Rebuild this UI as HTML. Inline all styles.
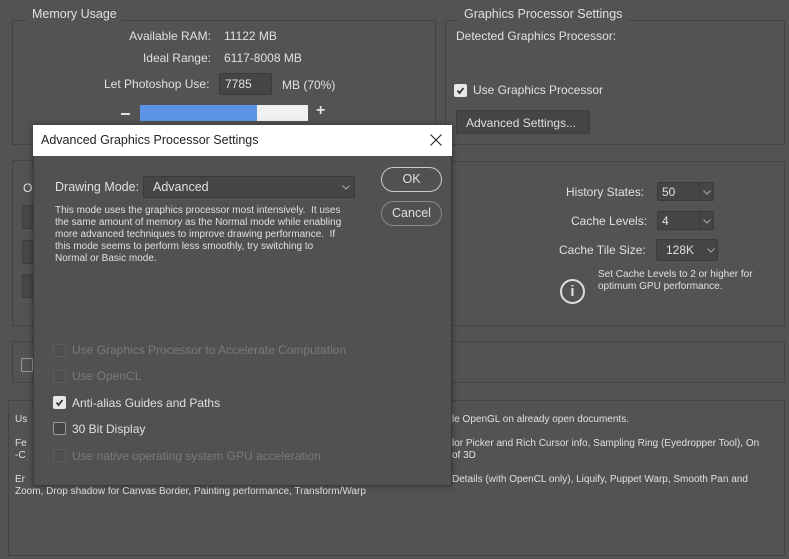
<!DOCTYPE html>
<html><head><meta charset="utf-8"><style>
*{box-sizing:border-box;margin:0;padding:0}
body{width:789px;height:559px;background:#535353;font-family:"Liberation Sans",sans-serif;color:#e0e0e0;font-size:12px;position:relative;overflow:hidden}
.a{position:absolute;white-space:nowrap}
.box{position:absolute;border:1px solid #444}
.lbl{position:absolute;background:#535353;padding:0 5px;font-size:12.5px}
.inp{position:absolute;background:#454545;border:1px solid #3a3a3a;border-radius:2px}
.sel{position:absolute;background:#454545;border:1px solid #3a3a3a;border-radius:2px}
.chev{position:absolute;width:8px;height:5px}
.cb{position:absolute;width:13px;height:13px;border:1px solid #999;border-radius:2px;background:#444}
.cb.on{background:#e8e8e8;border-color:#e8e8e8}
.cb.dis{border-color:#5c5c5c;background:#4f4f4f}
.small{font-size:10px;color:#e0e0e0;line-height:12px}
.dis{color:#7a7a7a}
</style></head><body>
<div class="box" style="left:12px;top:20px;width:424px;height:125px"></div>
<div class="lbl" style="left:27px;top:7px">Memory Usage</div>
<div class="a" style="right:578px;top:29px">Available RAM:</div>
<div class="a" style="left:224px;top:29px">11122 MB</div>
<div class="a" style="right:578px;top:51px">Ideal Range:</div>
<div class="a" style="left:224px;top:51px">6117-8008 MB</div>
<div class="a" style="left:104px;top:77px">Let Photoshop Use:</div>
<div class="inp" style="left:219px;top:73px;width:53px;height:22px"></div>
<div class="a" style="left:225px;top:77px">7785</div>
<div class="a" style="left:282px;top:78px">MB (70%)</div>
<div class="a" style="left:121px;width:9px;height:2px;top:113px;background:#e0e0e0"></div>
<div class="a" style="left:140px;top:105px;width:117px;height:16px;background:#5c95e8"></div>
<div class="a" style="left:257px;top:105px;width:51px;height:16px;background:#f0f0f0"></div>
<div class="a" style="left:316px;top:102px;font-size:16px;font-weight:bold">+</div>
<div class="box" style="left:445px;top:20px;width:340px;height:125px"></div>
<div class="lbl" style="left:459px;top:7px">Graphics Processor Settings</div>
<div class="a" style="left:456px;top:29px">Detected Graphics Processor:</div>
<div class="cb on" style="left:454px;top:84px"><svg width="11" height="11" style="position:absolute;left:0;top:0"><path d="M2.5 5.5 L4.5 8 L8.5 3" stroke="#333" stroke-width="1.8" fill="none"/></svg></div>
<div class="a" style="left:473px;top:83px">Use Graphics Processor</div>
<div class="a" style="left:456px;top:110px;width:134px;height:24px;background:#454545;border:1px solid #3d3d3d;border-radius:2px"></div>
<div class="a" style="left:466px;top:116px">Advanced Settings...</div>
<div class="box" style="left:12px;top:160px;width:430px;height:166px"></div>
<div class="a" style="left:23px;top:181px">O</div>
<div class="a" style="left:22px;top:205px;width:20px;height:24px;background:#474747;border:1px solid #3d3d3d"></div>
<div class="a" style="left:22px;top:240px;width:20px;height:24px;background:#474747;border:1px solid #3d3d3d"></div>
<div class="a" style="left:22px;top:274px;width:20px;height:24px;background:#474747;border:1px solid #3d3d3d"></div>
<div class="box" style="left:451px;top:161px;width:334px;height:165px"></div>
<div class="a" style="left:566px;top:185px">History States:</div>
<div class="sel" style="left:657px;top:182px;width:57px;height:19px"></div><div class="a" style="left:662px;top:185px">50</div><div class="a" style="left:699px;top:183px;width:1px;height:17px;background:#3a3a3a"></div><svg class="chev" style="left:703px;top:190px"><path d="M0.5 0.5 L4 4 L7.5 0.5" stroke="#aaa" fill="none"/></svg>
<div class="a" style="left:571px;top:214px">Cache Levels:</div>
<div class="sel" style="left:657px;top:211px;width:57px;height:19px"></div><div class="a" style="left:662px;top:214px">4</div><div class="a" style="left:699px;top:212px;width:1px;height:17px;background:#3a3a3a"></div><svg class="chev" style="left:703px;top:219px"><path d="M0.5 0.5 L4 4 L7.5 0.5" stroke="#aaa" fill="none"/></svg>
<div class="a" style="left:559px;top:243px">Cache Tile Size:</div>
<div class="sel" style="left:656px;top:239px;width:62px;height:22px"></div><div class="a" style="left:666px;top:243px">128K</div><svg class="chev" style="left:707px;top:248px"><path d="M0.5 0.5 L4 4 L7.5 0.5" stroke="#aaa" fill="none"/></svg>
<div class="a small" style="left:598px;top:269px">Set Cache Levels to 2 or higher for<br>optimum GPU performance.</div>
<div class="a" style="left:560px;top:279px;width:25px;height:25px;border:2px solid #ddd;border-radius:50%;text-align:center;font-weight:bold;font-size:15px;line-height:21px">i</div>
<div class="box" style="left:12px;top:341px;width:773px;height:42px"></div>
<div class="a" style="left:21px;top:358px;width:12px;height:14px;border:1px solid #999;border-radius:2px"></div>
<div class="box" style="left:8px;top:400px;width:777px;height:156px"></div>
<div class="a small" style="left:15px;top:414px">Us</div>
<div class="a small" style="left:452px;top:414px">le OpenGL on already open documents.</div>
<div class="a small" style="left:15px;top:438px">Fe<br>-C</div>
<div class="a small" style="left:452px;top:438px">lor Picker and Rich Cursor info, Sampling Ring (Eyedropper Tool), On<br>of 3D</div>
<div class="a small" style="left:15px;top:474px">Er</div>
<div class="a small" style="left:452px;top:474px">Details (with OpenCL only), Liquify, Puppet Warp, Smooth Pan and</div>
<div class="a small" style="left:15px;top:486px">Zoom, Drop shadow for Canvas Border, Painting performance, Transform/Warp</div>
<div class="a" style="left:33px;top:125px;width:419px;height:361px;background:#515151;border:1px solid #3a3a3a;box-shadow:0 0 6px rgba(0,0,0,.4)"></div>
<div class="a" style="left:33px;top:125px;width:419px;height:31px;background:#fff"></div>
<div class="a" style="left:41px;top:133px;color:#222;font-size:12.5px">Advanced Graphics Processor Settings</div>
<svg class="a" style="left:430px;top:134px" width="12" height="12"><path d="M0.5 0.5 L11.5 11.5 M11.5 0.5 L0.5 11.5" stroke="#222" stroke-width="1.1"/></svg>
<div class="a" style="left:55px;top:180px;font-size:12.5px">Drawing Mode:</div>
<div class="sel" style="left:143px;top:176px;width:212px;height:22px"></div>
<div class="a" style="left:153px;top:180px;font-size:12.5px">Advanced</div>
<svg class="chev" style="left:342px;top:185px"><path d="M0.5 0.5 L4 4 L7.5 0.5" stroke="#aaa" fill="none"/></svg>
<div class="a" style="left:381px;top:167px;width:61px;height:25px;border:1.5px solid #ccc;border-radius:13px;text-align:center;line-height:22px;font-size:12.5px">OK</div>
<div class="a" style="left:381px;top:201px;width:61px;height:25px;border:1.5px solid #888;border-radius:13px;text-align:center;line-height:22px;font-size:12.5px">Cancel</div>
<div class="a small" style="left:55px;top:205px">This mode uses the graphics processor most intensively.&nbsp; It uses<br>the same amount of memory as the Normal mode while enabling<br>more advanced techniques to improve drawing performance.&nbsp; If<br>this mode seems to perform less smoothly, try switching to<br>Normal or Basic mode.</div>
<div class="cb dis" style="left:53px;top:344px"></div><div class="a dis" style="left:72px;top:343px">Use Graphics Processor to Accelerate Computation</div>
<div class="cb dis" style="left:53px;top:370px"></div><div class="a dis" style="left:72px;top:369px">Use OpenCL</div>
<div class="cb on" style="left:53px;top:396px"><svg width="11" height="11" style="position:absolute;left:0;top:0"><path d="M2.5 5.5 L4.5 8 L8.5 3" stroke="#333" stroke-width="1.8" fill="none"/></svg></div><div class="a" style="left:72px;top:396px">Anti-alias Guides and Paths</div>
<div class="cb" style="left:53px;top:422px"></div><div class="a" style="left:72px;top:422px">30 Bit Display</div>
<div class="cb dis" style="left:53px;top:449px"></div><div class="a dis" style="left:72px;top:449px">Use native operating system GPU acceleration</div>
</body></html>
